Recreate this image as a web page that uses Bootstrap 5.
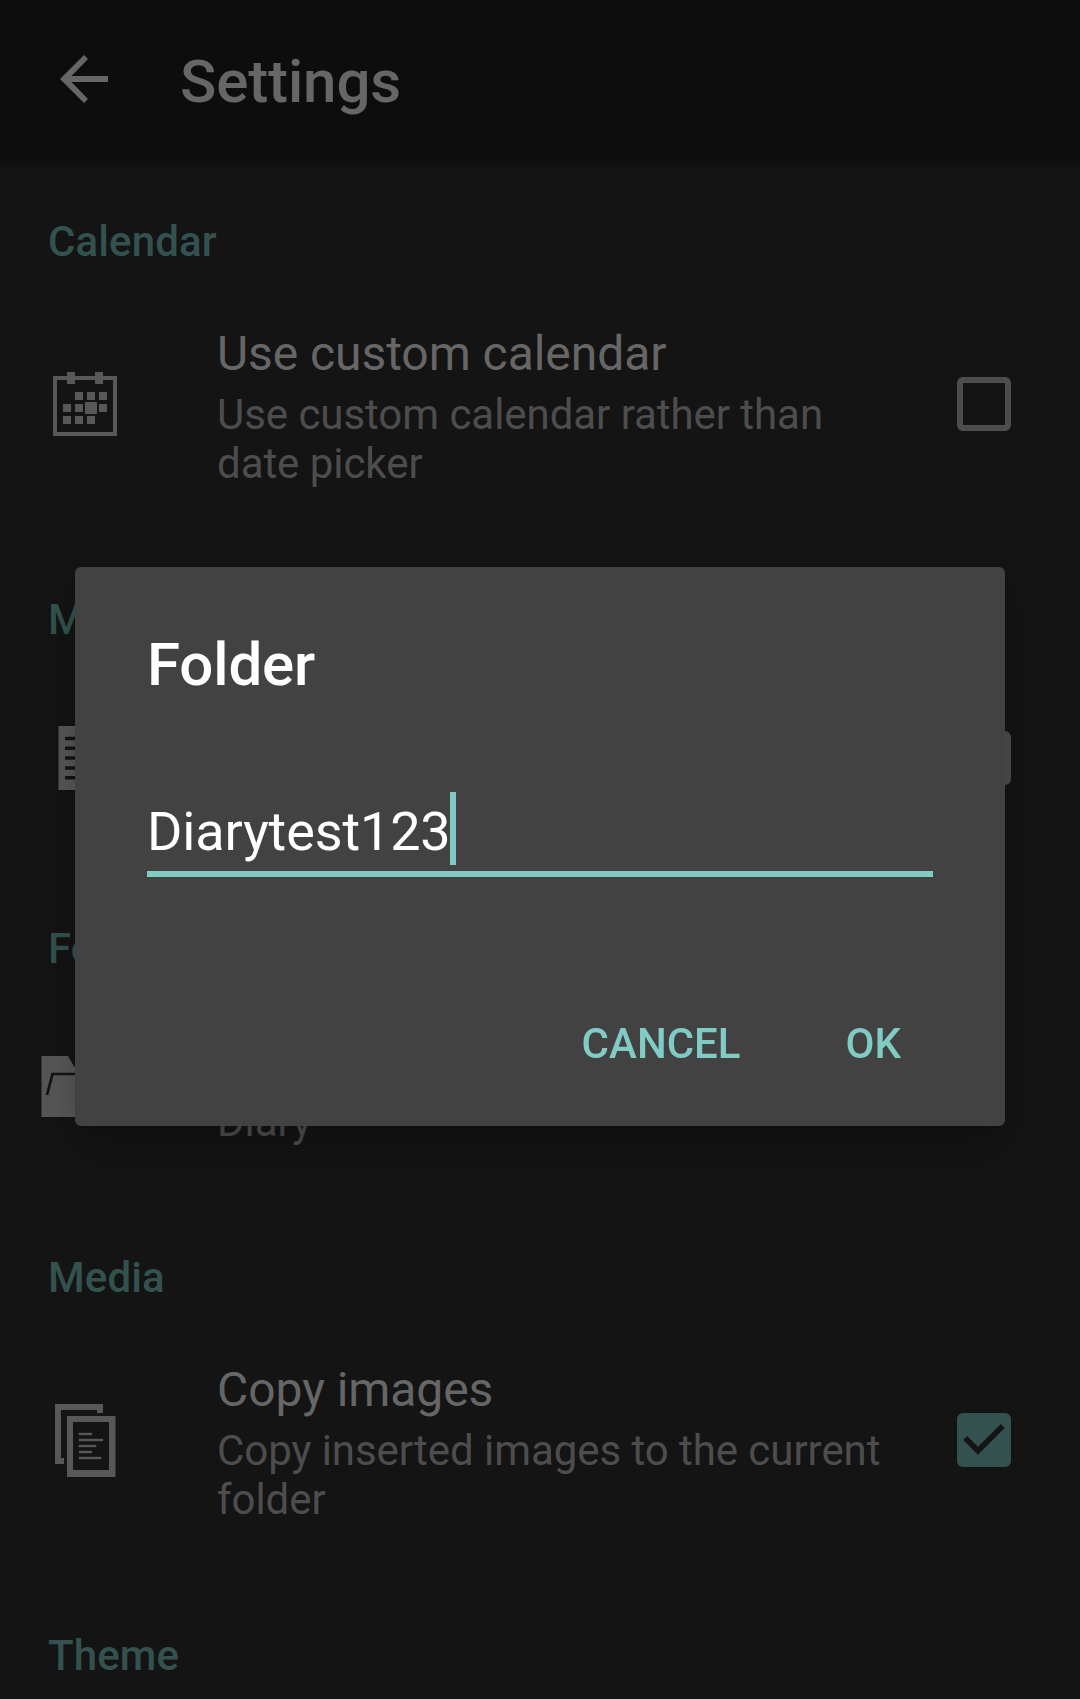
<!DOCTYPE html>
<html lang="en">
<head>
<meta charset="utf-8">
<meta name="viewport" content="width=device-width, initial-scale=1">
<title>Settings</title>
<link href="https://cdn.jsdelivr.net/npm/bootstrap@5.3.0/dist/css/bootstrap.min.css" rel="stylesheet">
<style>
  body { font-family: Roboto, "Noto Sans", sans-serif; background: #141414; color: #666; height: 1699px; }
  .app-header { height: 162px; background: #0d0d0d; box-shadow: 0 2px 8px rgba(0,0,0,.35); padding: 0 0 0 60px; }
  .back-arrow { margin-top: -4px; }
  .app-title { font-size: 60px; line-height: 70px; font-weight: 500; margin-left: 72px; padding-top: 1px; letter-spacing: -.12px; }
  .pref-category { height: 106px; padding: 55px 48px 0; font-size: 42px; line-height: 49px; font-weight: 500; color: #33524f; letter-spacing: .1px; }
  .pref-item { height: 223px; padding: 0 69px 0 40px; }
  .pref-tall { height: 272px; }
  .pref-icon { width: 177px; }
  .pref-title { font-size: 48px; line-height: 56px; letter-spacing: -.06px; }
  .pref-summary { font-size: 42px; line-height: 49px; color: #4d4d4d; margin: 8px 0 -5px; letter-spacing: -.05px; }
  .pref-text { width: 700px; }
  .check-box { width: 54px; height: 54px; border: 6px solid #4d4d4d; border-radius: 6px; }
  .check-box-on { width: 54px; height: 54px; }
  .folder-dialog { width: 930px; height: 559px; margin: 567px auto 0; background: #424242; color: #fff; border-radius: 6px; padding: 63px 72px 0; box-shadow: 0 22px 56px rgba(0,0,0,.2), 0 0 30px rgba(0,0,0,.06); }
  .dialog-heading { font-size: 60px; line-height: 70px; font-weight: 500; letter-spacing: -.12px; }
  .folder-input { height: 85px; margin-top: 92px; border-bottom: 6px solid #80cbc4; font-size: 54px; line-height: 80px; letter-spacing: -.13px; }
  .text-caret { width: 6px; height: 73px; background: #80cbc4; margin-left: -1px; }
  .dialog-actions { padding: 142px 32px 0 0; gap: 105px; }
  .dialog-btn { font-size: 42px; line-height: 49px; font-weight: 500; color: #80cbc4; padding: 0; border: 0; border-radius: 0; }
</style>
</head>
<body class="overflow-hidden">
<header class="app-header d-flex align-items-center position-relative">
  <svg width="48" height="48" viewBox="0 0 48 48" class="back-arrow flex-shrink-0"><path d="M48 21H11.5L28 4 24 0 0 24 24 48 28 44 11.5 27H48Z" fill="#666"/></svg>
  <h1 class="app-title mb-0">Settings</h1>
</header>
<main>
  <section>
    <h2 class="pref-category mb-0">Calendar</h2>
    <div class="pref-item pref-tall d-flex align-items-center">
      <div class="pref-icon flex-shrink-0">
        <svg class="d-block" width="90" height="64" viewBox="0 0 90 64" fill="#585858">
          <path fill-rule="evenodd" d="M13 4H77V64H13ZM17 8V60H73V8Z"/>
          <path d="M27 0h8v12h-8zM55 0h8v12h-8zM35 20h8v8h-8zM47 20h8v8h-8zM59 20h8v8h-8zM23 32h8v8h-8zM35 32h8v8h-8zM45 30h12v12H45zM59 32h8v8h-8zM23 44h8v8h-8zM35 44h8v8h-8zM47 44h8v8h-8z"/>
        </svg>
      </div>
      <div class="pref-text">
        <div class="pref-title">Use custom calendar</div>
        <div class="pref-summary">Use custom calendar rather than<br>date picker</div>
      </div>
      <div class="check-box ms-auto"></div>
    </div>
  </section>
  <section>
    <h2 class="pref-category mb-0">M</h2>
    <div class="pref-item d-flex align-items-center">
      <div class="pref-icon flex-shrink-0">
        <svg class="d-block" width="90" height="64" viewBox="0 0 90 64"><path d="M18.500 0H66V64H18.500Z" fill="#585858"/><path d="M25 12.500H60M25 22.200H60M25 32H60M25 42H60M25 51.700H60" stroke="#141414" stroke-width="3.500"/></svg>
      </div>
      <div class="check-box ms-auto"></div>
    </div>
  </section>
  <section>
    <h2 class="pref-category mb-0">Folder</h2>
    <div class="pref-item d-flex align-items-center">
      <div class="pref-icon flex-shrink-0">
        <svg class="d-block" width="90" height="61" viewBox="0 0 90 61"><path d="M1.500 0H28L38 17H78V61H1.500Z" fill="#585858"/><path d="M7 39 12.500 18H80" fill="none" stroke="#141414" stroke-width="2.700"/></svg>
      </div>
      <div class="pref-text">
        <div class="pref-title">Folder</div>
        <div class="pref-summary">Diary</div>
      </div>
    </div>
  </section>
  <section>
    <h2 class="pref-category mb-0">Media</h2>
    <div class="pref-item pref-tall d-flex align-items-center">
      <div class="pref-icon flex-shrink-0">
        <svg class="d-block" width="90" height="73" viewBox="0 0 90 73" fill="#585858">
          <path d="M15 0H63V9H57V6H21V54H24V60H15Z"/>
          <path fill-rule="evenodd" d="M27 12H75.500V73H27ZM33 18V66H69V18Z"/>
          <path d="M39 29h13v2H39zM39 35h24v2H39zM39 41h17v2H39zM39 47h13v2H39zM39 53h22v2H39z" stroke="#585858" stroke-width=".4"/>
        </svg>
      </div>
      <div class="pref-text">
        <div class="pref-title">Copy images</div>
        <div class="pref-summary">Copy inserted images to the current<br>folder</div>
      </div>
      <svg class="check-box-on ms-auto" viewBox="0 0 54 54"><rect width="54" height="54" rx="6" fill="#33524f"/><path d="M8.200 25 21 37.800 45.800 13" fill="none" stroke="#141414" stroke-width="5.600"/></svg>
    </div>
  </section>
  <section>
    <h2 class="pref-category mb-0">Theme</h2>
  </section>
</main>
<div class="position-fixed top-0 start-0 w-100 h-100 overflow-hidden" role="dialog" aria-label="Folder">
  <div class="folder-dialog">
    <h2 class="dialog-heading mb-0">Folder</h2>
    <div class="folder-input d-flex"><span>Diarytest123</span><span class="text-caret"></span></div>
    <div class="d-flex justify-content-end dialog-actions">
      <button class="btn dialog-btn">CANCEL</button>
      <button class="btn dialog-btn">OK</button>
    </div>
  </div>
</div>
<script src="https://cdn.jsdelivr.net/npm/bootstrap@5.3.0/dist/js/bootstrap.bundle.min.js"></script>
</body>
</html>
